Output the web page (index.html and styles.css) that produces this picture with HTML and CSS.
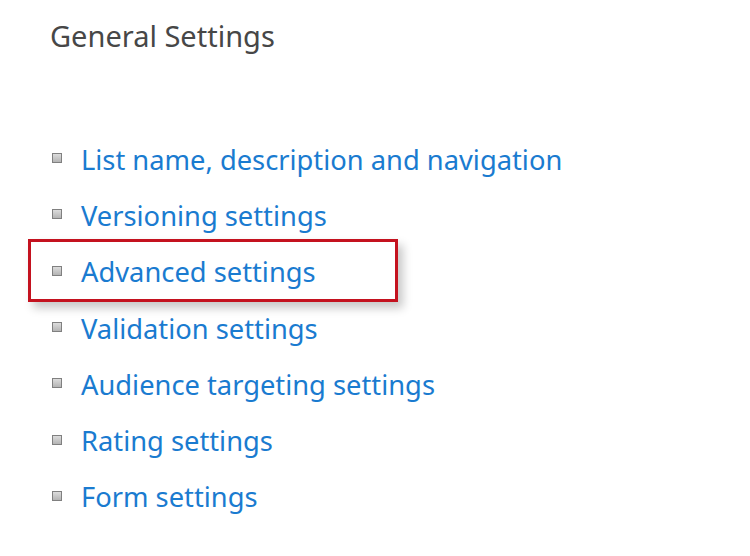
FILE: index.html
```html
<!DOCTYPE html>
<html>
<head>
<meta charset="utf-8">
<link rel="stylesheet" href="styles.css">
</head>
<body>
<div class="page">
  <h1 class="title">General Settings</h1>
  <ul class="settings">
    <li class="item"><span class="bullet"></span><a class="link" href="#">List name, description and navigation</a></li>
    <li class="item"><span class="bullet"></span><a class="link" href="#">Versioning settings</a></li>
    <li class="item"><span class="bullet"></span><a class="link" href="#">Advanced settings</a></li>
    <li class="item"><span class="bullet"></span><a class="link" href="#">Validation settings</a></li>
    <li class="item"><span class="bullet"></span><a class="link" href="#">Audience targeting settings</a></li>
    <li class="item"><span class="bullet"></span><a class="link" href="#">Rating settings</a></li>
    <li class="item"><span class="bullet"></span><a class="link" href="#">Form settings</a></li>
  </ul>
  <div class="highlight"></div>
</div>
</body>
</html>
```
FILE: styles.css
```css
html, body {
  margin: 0;
  padding: 0;
  background: #ffffff;
}
.page {
  position: relative;
  width: 750px;
  height: 556px;
  overflow: hidden;
  font-family: "Noto Sans", "Open Sans", sans-serif;
}
.title {
  margin: 0;
  padding: 16px 0 0 50px;
  font-size: 29px;
  font-weight: 400;
  color: #474747;
  line-height: 40px;
}
.settings {
  list-style: none;
  margin: 0;
  padding: 75px 0 0 52px;
  display: flex;
  flex-direction: column;
}
.item {
  display: flex;
  align-items: center;
  height: 56.3px;
}
.bullet {
  width: 8px;
  height: 8px;
  border: 1px solid #808080;
  background: linear-gradient(#dcdcdc, #b4b4b4);
  margin-right: 19px;
  margin-top: -2px;
  flex: none;
}
.link {
  color: #1a7bd0;
  text-decoration: none;
  font-size: 27.3px;
}
.highlight {
  position: absolute;
  left: 28px;
  top: 239px;
  width: 364px;
  height: 57px;
  border: 3px solid #c4121f;
  box-shadow: 5px 6px 9px rgba(0, 0, 0, 0.22);
}
```
